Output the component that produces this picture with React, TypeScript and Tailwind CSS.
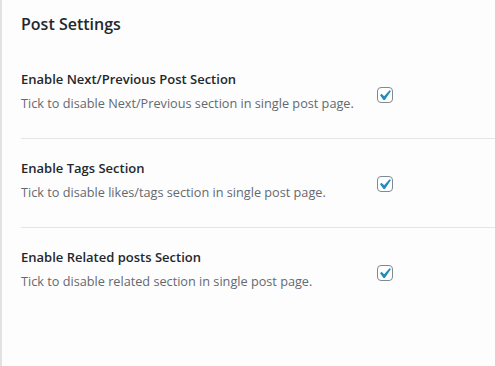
import React from 'react'

const rows = [
  {
    label: 'Enable Next/Previous Post Section',
    desc: 'Tick to disable Next/Previous section in single post page.',
  },
  {
    label: 'Enable Tags Section',
    desc: 'Tick to disable likes/tags section in single post page.',
  },
  {
    label: 'Enable Related posts Section',
    desc: 'Tick to disable related section in single post page.',
  },
]

const Checkbox = () => (
  <span className="relative block w-4 h-4 rounded-[4px] border border-[#7e8993] bg-white">
    <svg viewBox="0 0 20 20" className="absolute -top-[3px] -left-[4px] w-[21px] h-[21px]">
      <path d="M14.83 4.89l1.34.94-5.81 8.38H9.02L5.78 9.67l1.34-1.25 2.57 2.4z" fill="#1e8cbe" />
    </svg>
  </span>
)

export default function App() {
  return (
    <div className="w-[495px] h-[366px] bg-[#fdfdfd] border-l-2 border-[#e2e2e2] overflow-hidden font-['Open_Sans',sans-serif]">
      <div className="h-[50px] pt-[12px] pl-[19px]">
        <h2 className="text-[16px] leading-[24px] font-semibold text-[#23282d]">Post Settings</h2>
      </div>
      <div className="ml-[19px]">
        {rows.map((row, i) => (
          <div
            key={row.label}
            className={`flex h-[89px] pt-[19px] ${i < rows.length - 1 ? 'border-b border-[#e5e5e5]' : ''}`}
          >
            <div className="w-[356px]">
              <div className="text-[13px] leading-[20px] font-semibold text-[#23282d]">{row.label}</div>
              <div className="mt-[4px] text-[12.7px] leading-[20px] text-[#646970]">{row.desc}</div>
            </div>
            <div className="pt-[18px]">
              <Checkbox />
            </div>
          </div>
        ))}
      </div>
    </div>
  )
}
